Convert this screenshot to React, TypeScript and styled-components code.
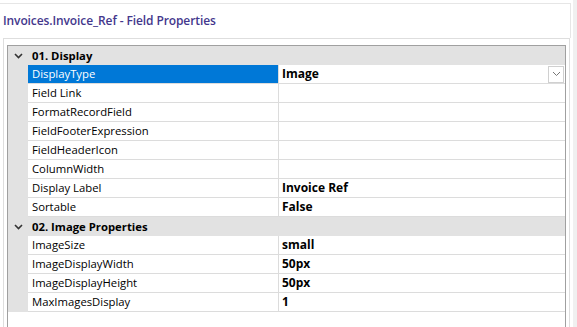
import React from 'react';
import styled, { createGlobalStyle } from 'styled-components';

type Prop = { name: string; value?: string; selected?: boolean; dropdown?: boolean };
type Category = { title: string; props: Prop[] };

const categories: Category[] = [
    {
        title: '01. Display',
        props: [
            { name: 'DisplayType', value: 'Image', selected: true, dropdown: true },
            { name: 'Field Link' },
            { name: 'FormatRecordField' },
            { name: 'FieldFooterExpression' },
            { name: 'FieldHeaderIcon' },
            { name: 'ColumnWidth' },
            { name: 'Display Label', value: 'Invoice Ref' },
            { name: 'Sortable', value: 'False' },
        ],
    },
    {
        title: '02. Image Properties',
        props: [
            { name: 'ImageSize', value: 'small' },
            { name: 'ImageDisplayWidth', value: '50px' },
            { name: 'ImageDisplayHeight', value: '50px' },
            { name: 'MaxImagesDisplay', value: '1' },
        ],
    },
];

const Chevron = ({ color, weight }: { color: string; weight: number }) => (
    <svg width="9" height="6" viewBox="0 0 9 6">
        <path d="M1 1 L4.5 4.5 L8 1" fill="none" stroke={color} strokeWidth={weight} />
    </svg>
);

const App = () => {
    return (
        <Page>
            <GlobalStyle />
            <Main>
                <TitleBar>
                    <Title>Invoices.Invoice_Ref - Field Properties</Title>
                </TitleBar>
                <Panel>
                    <Grid>
                        {categories.map(cat => (
                            <React.Fragment key={cat.title}>
                                <CategoryRow>
                                    <Toggle><Chevron color="#333" weight={1.6} /></Toggle>
                                    <CategoryTitle>{cat.title}</CategoryTitle>
                                </CategoryRow>
                                {cat.props.map(p => (
                                    <PropRow key={p.name}>
                                        <Gutter />
                                        <NameCell selected={p.selected}>{p.name}</NameCell>
                                        <Divider />
                                        <ValueCell>
                                            <ValueText>{p.value}</ValueText>
                                            {p.dropdown ? (
                                                <DropButton><Chevron color="#777" weight={1} /></DropButton>
                                            ) : null}
                                        </ValueCell>
                                    </PropRow>
                                ))}
                            </React.Fragment>
                        ))}
                    </Grid>
                </Panel>
            </Main>
            <SideStrip />
        </Page>
    );
};

export default App;

/*-----------------STYLES-----------------*/
const GlobalStyle = createGlobalStyle`
    html, body {
        margin: 0;
        padding: 0;
        background: #fff;
    }
    body {
        font-family: "Open Sans", "Noto Sans", sans-serif;
        font-size: 11.3px;
        color: #000;
    }
`;

const Page = styled.div`
    display: flex;
    width: 577px;
    height: 327px;
    overflow: hidden;
    background: #fff;
`;

const Main = styled.div`
    width: 571px;
    display: flex;
    flex-direction: column;
    padding-top: 3px;
    box-sizing: border-box;
`;

const TitleBar = styled.div`
    height: 35px;
    box-sizing: border-box;
    border-top: 1px solid #e6e6e6;
    border-right: 1px solid #e6e6e6;
    display: flex;
    align-items: center;
    padding: 0 0 2px 3px;
`;

const Title = styled.div`
    color: #43378c;
    font-weight: 600;
    font-size: 12px;
    letter-spacing: -0.1px;
`;

const Panel = styled.div`
    flex: 1;
    margin: 0 1px 0 3px;
    border: 1px solid #dedede;
    border-bottom: none;
    padding: 6px 3px 0 3px;
    display: flex;
    flex-direction: column;
`;

const Grid = styled.div`
    flex: 1;
    border: 1px solid #a0a0a0;
    border-bottom: none;
    background: #fff;
`;

const CategoryRow = styled.div`
    display: grid;
    grid-template-columns: 20px 1fr;
    align-items: center;
    height: 19px;
    background: #e2e2e2;
`;

const Toggle = styled.div`
    display: flex;
    justify-content: center;
    align-items: center;
    padding-top: 1px;
`;

const CategoryTitle = styled.div`
    font-weight: 700;
    padding-left: 4px;
`;

const PropRow = styled.div`
    display: grid;
    grid-template-columns: 20px 250px 1px 1fr;
    height: 19px;
`;

const Gutter = styled.div`
    background: #e2e2e2;
`;

const NameCell = styled.div<{ selected?: boolean }>`
    background: ${p => (p.selected ? '#0078d7' : '#fff')};
    color: ${p => (p.selected ? '#fff' : '#000')};
    border-bottom: 1px solid #dcdcdc;
    padding-left: 4px;
    line-height: 18px;
    white-space: nowrap;
`;

const Divider = styled.div`
    background: #dcdcdc;
`;

const ValueCell = styled.div`
    display: flex;
    align-items: center;
    border-bottom: 1px solid #dcdcdc;
    padding: 0 1px 0 3px;
`;

const ValueText = styled.div`
    flex: 1;
    font-weight: 700;
    font-size: 12px;
    line-height: 18px;
    white-space: nowrap;
`;

const DropButton = styled.div`
    width: 16px;
    height: 17px;
    box-sizing: border-box;
    border: 1px solid #d0d0d0;
    background: #fff;
    display: flex;
    align-items: center;
    justify-content: center;
`;

const SideStrip = styled.div`
    margin-left: 2px;
    width: 4px;
    background: #f0f0f0;
`;
